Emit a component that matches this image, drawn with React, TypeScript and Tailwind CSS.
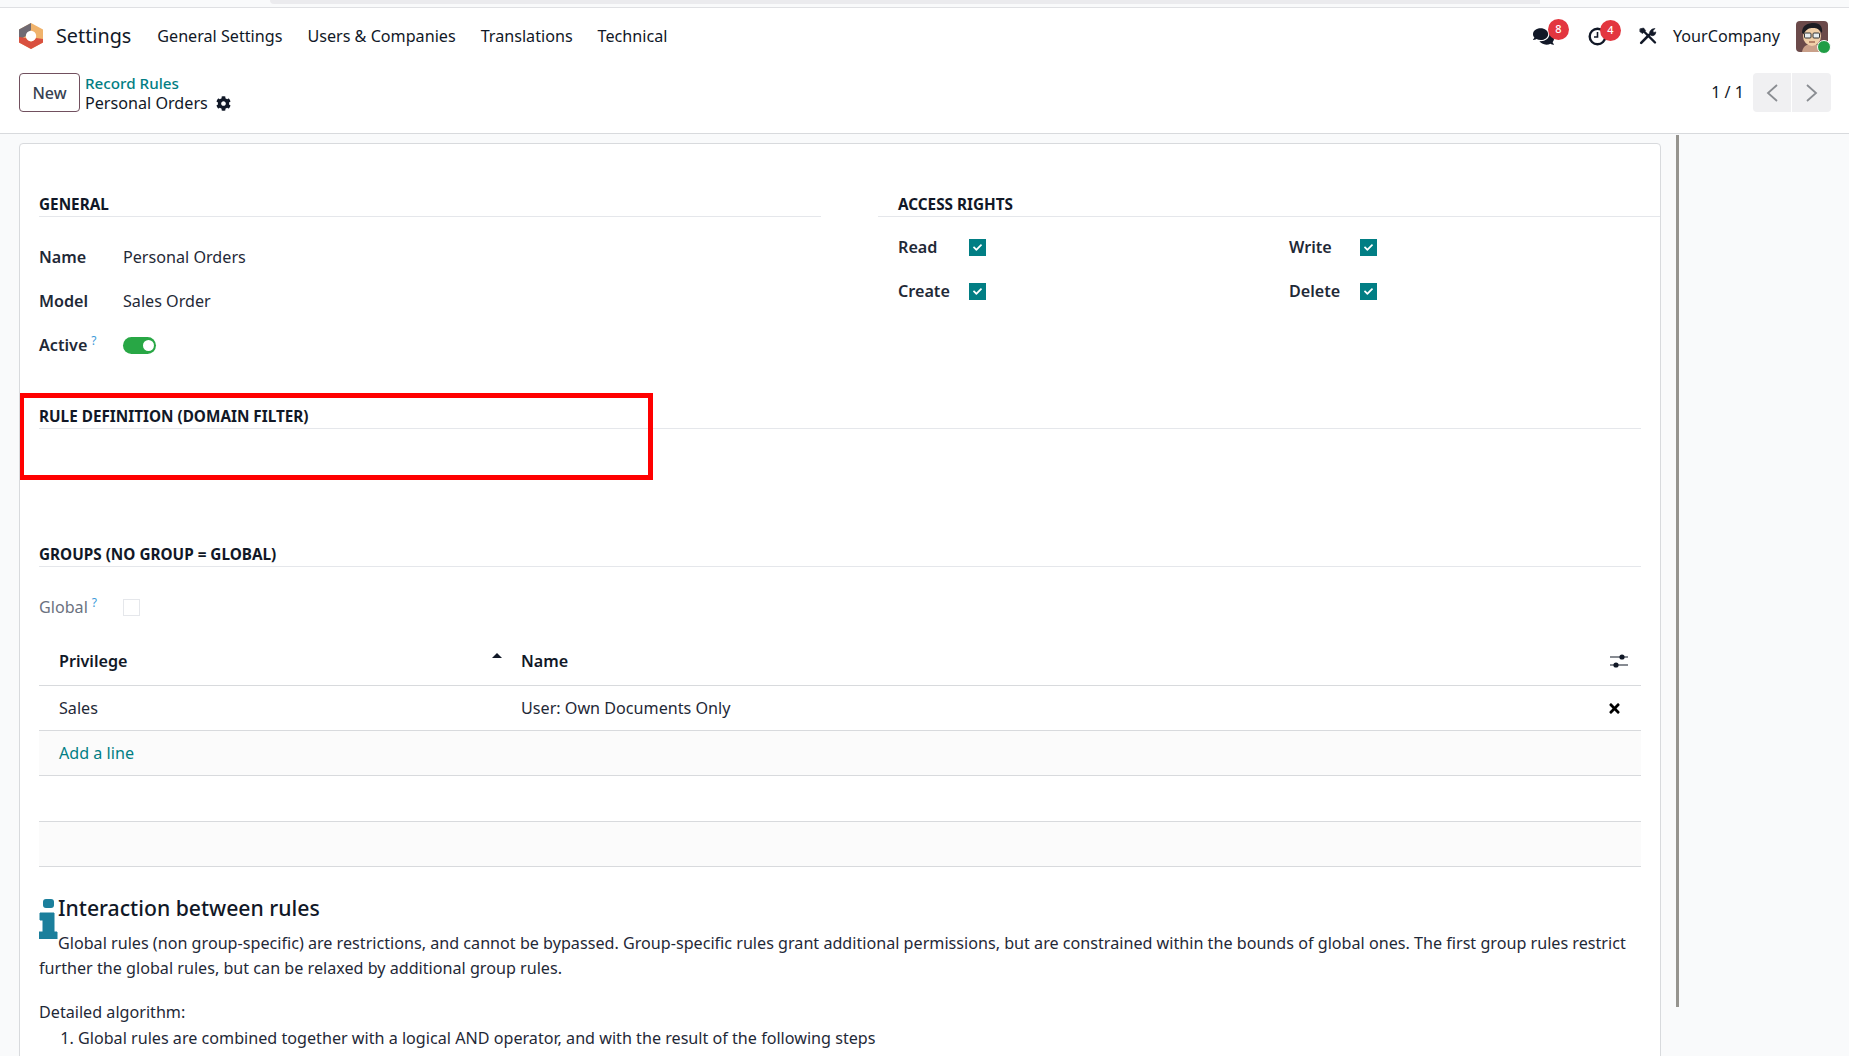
import React from "react";
import { FaCog, FaComments, FaTimes, FaCheck } from "react-icons/fa";

const font = "font-['Noto_Sans',sans-serif]";

function Logo() {
  return (
    <svg width="24" height="26" viewBox="0 0 24 26" className="shrink-0">
      <polygon points="12,0 24,6.5 24,19.5 12,26 0,19.5 0,6.5" fill="#f0b36c" />
      <polygon points="12,0 0,6.5 0,17 7,13 12,7" fill="#6f6a73" />
      <polygon points="0,14 0,19.5 12,26 24,19.5 24,16 17,15 12,19 7,15" fill="#d9503f" />
      <circle cx="12" cy="13" r="5.2" fill="#fff" />
    </svg>
  );
}

function Avatar() {
  return (
    <div className="relative w-[32px] h-[31px]">
      <svg width="32" height="31" viewBox="0 0 32 31" className="rounded-[4px]">
        <rect width="32" height="31" fill="#6b4a4a" />
        <path d="M6 31c1-6 5-8 10-8s10 2 10 8z" fill="#c9a08a" />
        <ellipse cx="16" cy="15" rx="9" ry="10" fill="#f0cfa8" />
        <path d="M6 12C6 4 12 2 18 2s9 4 8 10c-3-4-5-5-9-5-4 0-7 1-9 6z" fill="#1c1c22" />
        <rect x="8.5" y="12" width="6.5" height="5" rx="1" fill="#e8eef0" stroke="#333" />
        <rect x="17" y="12" width="6.5" height="5" rx="1" fill="#e8eef0" stroke="#333" />
        <path d="M13 21h6" stroke="#7a3a2a" strokeWidth="1.2" />
      </svg>
      <span className="absolute right-[-3px] bottom-[-2px] w-[14px] h-[14px] rounded-full bg-[#1f9d45] border border-white" />
    </div>
  );
}

function ToolsIcon() {
  return (
    <svg width="18" height="18" viewBox="0 0 18 18" className="mr-[16px]" fill="none" stroke="#111827" strokeLinecap="round">
      <path d="M5 4.5 16 15.5" strokeWidth="2.4" />
      <path d="M1.2 1.8 4.6 1l2 2.6-3 3L1 4.8z" fill="#111827" strokeWidth="0.6" />
      <path d="M2.2 15.8 10 8" strokeWidth="2.6" />
      <path d="M10.5 7.5c-.4-3 1.6-6 5.5-6l-2.2 2.4 1 1.6 2-.6c0 3.2-3 5.4-6.3 2.6z" fill="#111827" strokeWidth="0.6" />
    </svg>
  );
}

function Badge({ n, left }: { n: string; left: string }) {
  return (
    <span className={`absolute ${left} top-[-7px] w-[21px] h-[21px] rounded-full bg-[#e3363f] text-white text-[11px] font-medium flex items-center justify-center`}>
      {n}
    </span>
  );
}

function SectionTitle({ children }: { children: React.ReactNode }) {
  return (
    <div className="h-[25px] border-b border-[#e5e7eb] font-bold text-[15.3px] leading-[25px] text-[#111827] uppercase">
      {children}
    </div>
  );
}

function Help() {
  return <sup className="text-[#3b9ad9] text-[12px] ml-[4px] font-normal">?</sup>;
}

function Check() {
  return (
    <span className="w-[17px] h-[17px] bg-[#017e84] flex items-center justify-center text-white">
      <FaCheck size={9} />
    </span>
  );
}

function Right({ label }: { label: string }) {
  return (
    <div className="flex items-center">
      <span className="w-[71px] font-semibold text-[#1f2937]">{label}</span>
      <Check />
    </div>
  );
}

function Chevron({ d }: { d: string }) {
  return (
    <svg width="12" height="18" viewBox="0 0 12 18" fill="none" stroke="#8a8d92" strokeWidth="1.8">
      <path d={d} />
    </svg>
  );
}

export default function App() {
  return (
    <div className={`${font} h-[1056px] w-[1849px] overflow-hidden bg-[#f9fafb] text-[16.15px] text-[#1f2937] flex flex-col`}>
      <div className="h-[8px] shrink-0 bg-[#f9fafb] border-b border-[#dfe0e3] pl-[270px]">
        <div className="w-[1270px] h-[4px] bg-[#ebebee] rounded-bl-[4px]" />
      </div>

      <header className="h-[56px] shrink-0 bg-white flex items-center pl-[19px] pr-[21px]">
        <Logo />
        <span className="ml-[13px] text-[19.8px] text-[#111827]">Settings</span>
        <nav className="flex items-center ml-[26px] gap-[25px] text-[16.15px] text-[#111827]">
          <span>General Settings</span>
          <span>Users &amp; Companies</span>
          <span>Translations</span>
          <span>Technical</span>
        </nav>
        <div className="ml-auto flex items-center">
          <span className="relative mr-[34px] text-[#111827]"><FaComments size={21} /><Badge n="8" left="left-[15px]" /></span>
          <span className="relative mr-[32px] text-[#111827]">
            <svg width="19" height="19" viewBox="0 0 19 19" fill="none" stroke="#111827" strokeWidth="2.4">
              <circle cx="9.5" cy="9.5" r="7.8" />
              <path d="M9.5 5v5H6" strokeWidth="1.6" />
            </svg>
            <Badge n="4" left="left-[12px]" />
          </span>
          <ToolsIcon />
          <span className="text-[16.15px] text-[#111827] mr-[16px]">YourCompany</span>
          <Avatar />
        </div>
      </header>

      <div className="h-[70px] shrink-0 bg-white border-b border-[#d8dadd] flex items-start pl-[19px] pr-[18px] pt-[9px]">
        <button className="w-[61px] h-[39px] rounded-[4px] border border-[#71505f] text-[#374151] font-medium text-[16px]">New</button>
        <div className="ml-[5px] flex flex-col">
          <span className="text-[#017e84] text-[15.2px] font-medium leading-[20px]">Record Rules</span>
          <span className="flex items-center gap-[8px] text-[#111827] leading-[20px]">Personal Orders <FaCog size={15} /></span>
        </div>
        <div className="ml-auto flex items-center h-[39px]">
          <span className="mr-[9px] text-[#111827]">1 / 1</span>
          <span className="w-[38px] h-[39px] bg-[#f0f0f2] rounded-l-[4px] flex items-center justify-center"><Chevron d="M11 1 2 9l9 8" /></span>
          <span className="w-[39px] h-[39px] ml-[1px] bg-[#f0f0f2] rounded-r-[4px] flex items-center justify-center"><Chevron d="M1 1l9 8-9 8" /></span>
        </div>
      </div>

      <div className="flex-1 min-h-0 flex items-start pl-[19px]">
        <main className="relative mt-[9px] w-[1642px] h-[1000px] shrink-0 bg-white border border-[#d8dadd] rounded-t-[4px] overflow-hidden pt-[48px]">
          <div className="absolute left-[-1px] top-[249px] w-[634px] h-[87px] border-[5px] border-[#ff0000]" />

          <div className="flex">
            <div className="w-[801px] pl-[19px] shrink-0">
              <SectionTitle>General</SectionTitle>
              <div className="mt-[29px] flex flex-col gap-[22px] leading-[22px]">
                <div className="flex"><span className="w-[84px] font-semibold">Name</span><span>Personal Orders</span></div>
                <div className="flex"><span className="w-[84px] font-semibold">Model</span><span>Sales Order</span></div>
                <div className="flex items-center">
                  <span className="w-[84px] font-semibold">Active<Help /></span>
                  <span className="relative w-[33px] h-[17px] rounded-full bg-[#28a745]">
                    <span className="absolute right-[2px] top-[3px] w-[11px] h-[11px] rounded-full bg-white" />
                  </span>
                </div>
              </div>
            </div>
            <div className="flex-1 ml-[57px]">
              <div className="pl-[20px] border-b border-[#e5e7eb] h-[25px] font-bold text-[15.3px] leading-[25px] text-[#111827] uppercase">Access Rights</div>
              <div className="pl-[20px] mt-[19px] grid grid-cols-[391px_1fr] gap-y-[22px] leading-[22px]">
                <Right label="Read" />
                <Right label="Write" />
                <Right label="Create" />
                <Right label="Delete" />
              </div>
            </div>
          </div>

          <div className="pl-[19px] mt-[48px] pr-[19px]">
            <SectionTitle>Rule Definition (Domain Filter)</SectionTitle>
          </div>

          <div className="pl-[19px] mt-[113px] pr-[19px]">
            <SectionTitle>Groups (No Group = Global)</SectionTitle>
            <div className="flex items-center mt-[29px] h-[22px] text-[#6b7280]">
              <span className="w-[84px]">Global<Help /></span>
              <span className="w-[17px] h-[17px] border border-[#e5e7eb]" />
            </div>

            <div className="mt-[19px]">
              <div className="h-[49px] flex items-center border-b border-[#d8dadd] font-semibold text-[#111827]">
                <span className="w-[482px] pl-[20px] relative">Privilege
                  <span className="absolute left-[453px] top-[4px] w-0 h-0 border-x-[5px] border-x-transparent border-b-[5px] border-b-[#111827]" />
                </span>
                <span>Name</span>
                <svg width="18" height="16" viewBox="0 0 18 16" className="ml-auto mr-[13px]" stroke="#111827" fill="#111827">
                  <path d="M0 4h18M0 12h18" strokeWidth="1.2" />
                  <circle cx="12" cy="4" r="2.6" stroke="none" />
                  <circle cx="6" cy="12" r="2.6" stroke="none" />
                </svg>
              </div>
              <div className="h-[45px] flex items-center border-b border-[#d8dadd]">
                <span className="w-[482px] pl-[20px]">Sales</span>
                <span>User: Own Documents Only</span>
                <FaTimes size={15} className="ml-auto mr-[19px] text-black" />
              </div>
              <div className="h-[45px] flex items-center pl-[20px] border-b border-[#d8dadd] bg-[#fbfbfb] text-[#017e84]">Add a line</div>
              <div className="h-[46px] border-b border-[#d8dadd]" />
              <div className="h-[45px] border-b border-[#d8dadd] bg-[#fbfbfb]" />
            </div>

            <div className="mt-[26px]">
              <svg width="19" height="40" viewBox="0 0 19 40" fill="#1b7f9c" className="float-left mt-[6px]">
                <rect x="4" y="0" width="11" height="9" rx="3" />
                <path d="M1 14h14v19h3v7H0v-7h4V21H1z" strokeLinejoin="round" stroke="#1b7f9c" strokeWidth="1" />
              </svg>
              <h2 className="text-[21.2px] leading-[30px] font-medium text-[#111827]">Interaction between rules</h2>
              <p className="mt-[8px] leading-[25px]">
                Global rules (non group-specific) are restrictions, and cannot be bypassed. Group-specific rules grant additional permissions, but are constrained within the bounds of global ones. The first group rules restrict further the global rules, but can be relaxed by additional group rules.
              </p>
              <p className="mt-[19px] leading-[25px]">Detailed algorithm:</p>
              <ol className="list-decimal pl-[39px] leading-[25px] mt-[1px]">
                <li>Global rules are combined together with a logical AND operator, and with the result of the following steps</li>
              </ol>
            </div>
          </div>
        </main>
        <div className="mt-[1px] ml-[15px] w-[3px] h-[872px] bg-[#96948f] shrink-0" />
      </div>
    </div>
  );
}
